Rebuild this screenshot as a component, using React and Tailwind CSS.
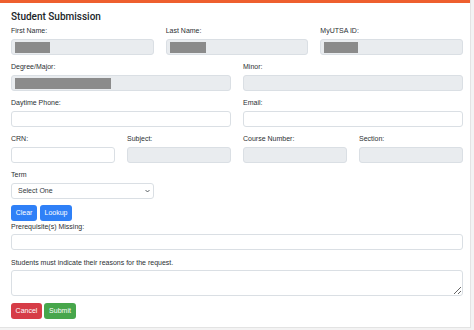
import React from "react";

const Label = ({ children }) => (
  <div className="text-[7px] leading-[8px] h-[8px] mb-[4px] text-[#2b2f33] whitespace-nowrap">{children}</div>
);

const Input = ({ gray, redact, className = "" }) => (
  <div
    className={`h-[16px] rounded-[3px] border border-[#dadfe4] flex items-center px-[3px] ${
      gray ? "bg-[#e9ecef]" : "bg-white"
    } ${className}`}
  >
    {redact ? <div className="h-[11px] bg-[#8b8b8b]" style={{ width: redact }} /> : null}
  </div>
);

const Field = ({ label, span, gray, redact }) => (
  <div className={span}>
    <Label>{label}</Label>
    <Input gray={gray} redact={redact} />
  </div>
);

export default function App() {
  return (
    <div
      className="w-[474px] h-[330px] bg-[#f3f3f3] overflow-hidden"
      style={{ fontFamily: '"Liberation Sans", Arial, sans-serif' }}
    >
      <div className="w-[471px] h-[328px] bg-white border-r border-b border-[#e3e3e3]">
        <div className="h-[3px] bg-[#ee5f2f]" />
        <div className="pl-[11px] pr-[7px] pt-[7px]">
          <div
            className="text-[10px] leading-[14px] font-medium text-[#212529] mb-[3px]"
            style={{ fontFamily: 'Roboto, "Liberation Sans", sans-serif' }}
          >
            Student Submission
          </div>

          <div className="grid grid-cols-12 gap-x-[12px] gap-y-[8px]">
            <Field label="First Name:" span="col-span-4" gray redact={35} />
            <Field label="Last Name:" span="col-span-4" gray redact={36} />
            <Field label="MyUTSA ID:" span="col-span-4" gray redact={34} />

            <Field label="Degree/Major:" span="col-span-6" gray redact={96} />
            <Field label="Minor:" span="col-span-6" gray />

            <Field label="Daytime Phone:" span="col-span-6" />
            <Field label="Email:" span="col-span-6" />

            <Field label="CRN:" span="col-span-3" />
            <Field label="Subject:" span="col-span-3" gray />
            <Field label="Course Number:" span="col-span-3" gray />
            <Field label="Section:" span="col-span-3" gray />

            <div className="col-span-4">
              <Label>Term</Label>
              <div className="h-[16px] rounded-[3px] border border-[#dadfe4] bg-white flex items-center justify-between pl-[6px] pr-[3px]">
                <span className="text-[7px] text-[#343a40]">Select One</span>
                <svg width="5" height="4" viewBox="0 0 10 8">
                  <path d="M1 2 L5 6 L9 2" fill="none" stroke="#343a40" strokeWidth="1.6" />
                </svg>
              </div>
            </div>
          </div>

          <div className="flex gap-[3px] mt-[6px]">
            <button className="h-[16px] w-[26px] rounded-[3px] bg-[#2f80f7] text-white text-[7px] leading-[16px]">
              Clear
            </button>
            <button className="h-[16px] w-[32px] rounded-[3px] bg-[#2f80f7] text-white text-[7px] leading-[16px]">
              Lookup
            </button>
          </div>

          <div className="mt-[2px]">
            <div className="text-[7px] leading-[8px] mb-[3px] text-[#2b2f33]">Prerequisite(s) Missing:</div>
            <Input />
          </div>

          <div className="mt-[9px]">
            <div className="text-[7px] leading-[8px] mb-[3px] text-[#2b2f33]">
              Students must indicate their reasons for the request.
            </div>
            <textarea className="block w-full h-[26px] rounded-[3px] border border-[#dadfe4] bg-white outline-none" />
          </div>

          <div className="flex gap-[2px] mt-[7px]">
            <button className="h-[16px] w-[31px] rounded-[3px] bg-[#d63c47] text-white text-[7px] leading-[16px]">
              Cancel
            </button>
            <button className="h-[16px] w-[32px] rounded-[3px] bg-[#47a64b] text-white text-[7px] leading-[16px]">
              Submit
            </button>
          </div>
        </div>
      </div>
    </div>
  );
}
